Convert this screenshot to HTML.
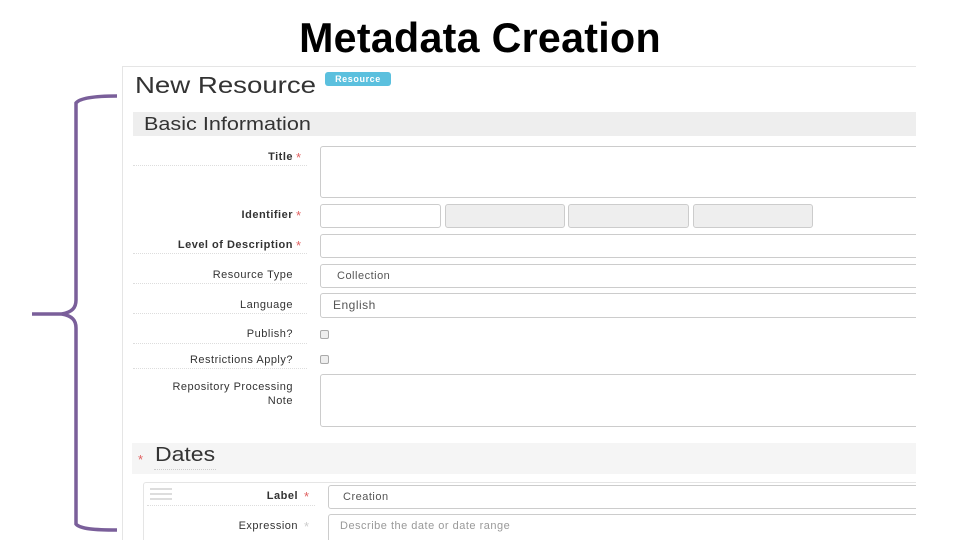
<!DOCTYPE html>
<html><head><style>
*{margin:0;padding:0;box-sizing:border-box}
body{width:960px;height:540px;background:#fff;position:relative;overflow:hidden;font-family:"Liberation Sans",sans-serif}
.a{position:absolute}
#wrap{position:absolute;left:0;top:0;width:916px;height:540px;overflow:hidden}
.lbl{position:absolute;font-size:11px;color:#333;text-align:right;width:160px;left:133px;letter-spacing:0.5px}
.b{font-weight:bold}
.st{position:absolute;color:#e06060;font-size:13px}
.dl{position:absolute;left:133px;width:174px;border-top:1px dotted #ddd}
.in{position:absolute;border:1px solid #ccc;border-radius:3px;background:#fff;font-size:11px;color:#555;padding-left:16px;letter-spacing:0.5px}
.g{background:#eee}
.cb{position:absolute;width:9px;height:9px;border:1px solid #aaa;border-radius:2px;background:#eee;left:320px}
</style></head><body>
<div class="a" style="left:0;width:960px;top:14px;text-align:center;font-size:42px;font-weight:bold;color:#000;letter-spacing:0.3px;transform:scaleX(0.98)">Metadata Creation</div>
<svg class="a" style="left:0;top:0" width="130" height="540">
<path d="M117 96 C95 96 80 98 76 103 L76 300 C76 308 72 312 62 314 C72 316 76 320 76 328 L76 524 C80 529 95 530 117 530" fill="none" stroke="#7a5f9a" stroke-width="3.5"/>
<path d="M32 314 L68 314" stroke="#7a5f9a" stroke-width="3.5"/>
</svg>
<div id="wrap">
<div class="a" style="left:122px;top:66px;width:800px;height:474px;border-left:1px solid #e5e5e5;border-top:1px solid #e5e5e5"></div>
<div class="a" style="left:135px;top:72px;font-size:23px;color:#333;transform:scaleX(1.2);transform-origin:0 0">New Resource</div>
<div class="a" style="left:325px;top:72px;width:66px;height:14px;background:#5bc0de;border-radius:3px;color:#fff;font-size:9px;font-weight:bold;text-align:center;line-height:14px;letter-spacing:0.6px">Resource</div>
<div class="a" style="left:133px;top:112px;width:790px;height:24px;background:#eee"></div>
<div class="a" style="left:144px;top:113px;font-size:18px;color:#333;line-height:22px;transform:scaleX(1.2);transform-origin:0 0">Basic Information</div>

<div class="lbl b" style="top:151px">Title</div><div class="st" style="left:296px;top:150px">*</div><div class="dl" style="top:165px"></div>
<div class="in" style="left:320px;top:146px;width:620px;height:52px"></div>

<div class="lbl b" style="top:209px">Identifier</div><div class="st" style="left:296px;top:208px">*</div>
<div class="in" style="left:320px;top:204px;width:121px;height:24px"></div>
<div class="in g" style="left:445px;top:204px;width:120px;height:24px"></div>
<div class="in g" style="left:568px;top:204px;width:121px;height:24px"></div>
<div class="in g" style="left:693px;top:204px;width:120px;height:24px"></div>

<div class="lbl b" style="top:239px">Level of Description</div><div class="st" style="left:296px;top:238px">*</div><div class="dl" style="top:253px"></div>
<div class="in" style="left:320px;top:234px;width:620px;height:24px"></div>

<div class="lbl" style="top:269px">Resource Type</div><div class="dl" style="top:283px"></div>
<div class="in" style="left:320px;top:264px;width:620px;height:24px;line-height:22px">Collection</div>

<div class="lbl" style="top:299px">Language</div><div class="dl" style="top:313px"></div>
<div class="in" style="left:320px;top:293px;width:620px;height:25px;line-height:23px;padding-left:12px;font-size:12px">English</div>

<div class="lbl" style="top:328px">Publish?</div><div class="dl" style="top:343px"></div>
<div class="cb" style="top:330px"></div>
<div class="lbl" style="top:354px">Restrictions Apply?</div><div class="dl" style="top:368px"></div>
<div class="cb" style="top:355px"></div>

<div class="lbl" style="top:380px;line-height:14px">Repository Processing<br>Note</div>
<div class="in" style="left:320px;top:374px;width:620px;height:53px"></div>

<div class="a" style="left:132px;top:443px;width:790px;height:31px;background:#f5f5f5"></div>
<div class="st" style="left:138px;top:452px">*</div>
<div class="a" style="left:155px;top:444px;font-size:20px;color:#333;transform:scaleX(1.15);transform-origin:0 0">Dates</div>
<div class="a" style="left:154px;top:469px;width:62px;border-top:1px dotted #ccc"></div>
<div class="a" style="left:143px;top:482px;width:790px;height:70px;border:1px solid #e5e5e5;border-radius:3px"></div>
<div class="a" style="left:150px;top:488px;width:22px;height:2px;background:#ddd;box-shadow:0 5px 0 #ddd,0 10px 0 #ddd"></div>
<div class="lbl b" style="left:138px;top:490px">Label</div><div class="st" style="left:304px;top:489px">*</div><div class="a" style="left:147px;top:505px;width:168px;border-top:1px dotted #ddd"></div>
<div class="in" style="left:328px;top:485px;width:620px;height:24px;line-height:22px;padding-left:14px">Creation</div>
<div class="lbl" style="left:138px;top:520px">Expression</div><div class="st" style="left:304px;top:519px;color:#ccc">*</div>
<div class="in" style="left:328px;top:514px;width:620px;height:30px;line-height:22px;padding-left:11px;color:#999">Describe the date or date range</div>
</div>
</body></html>
